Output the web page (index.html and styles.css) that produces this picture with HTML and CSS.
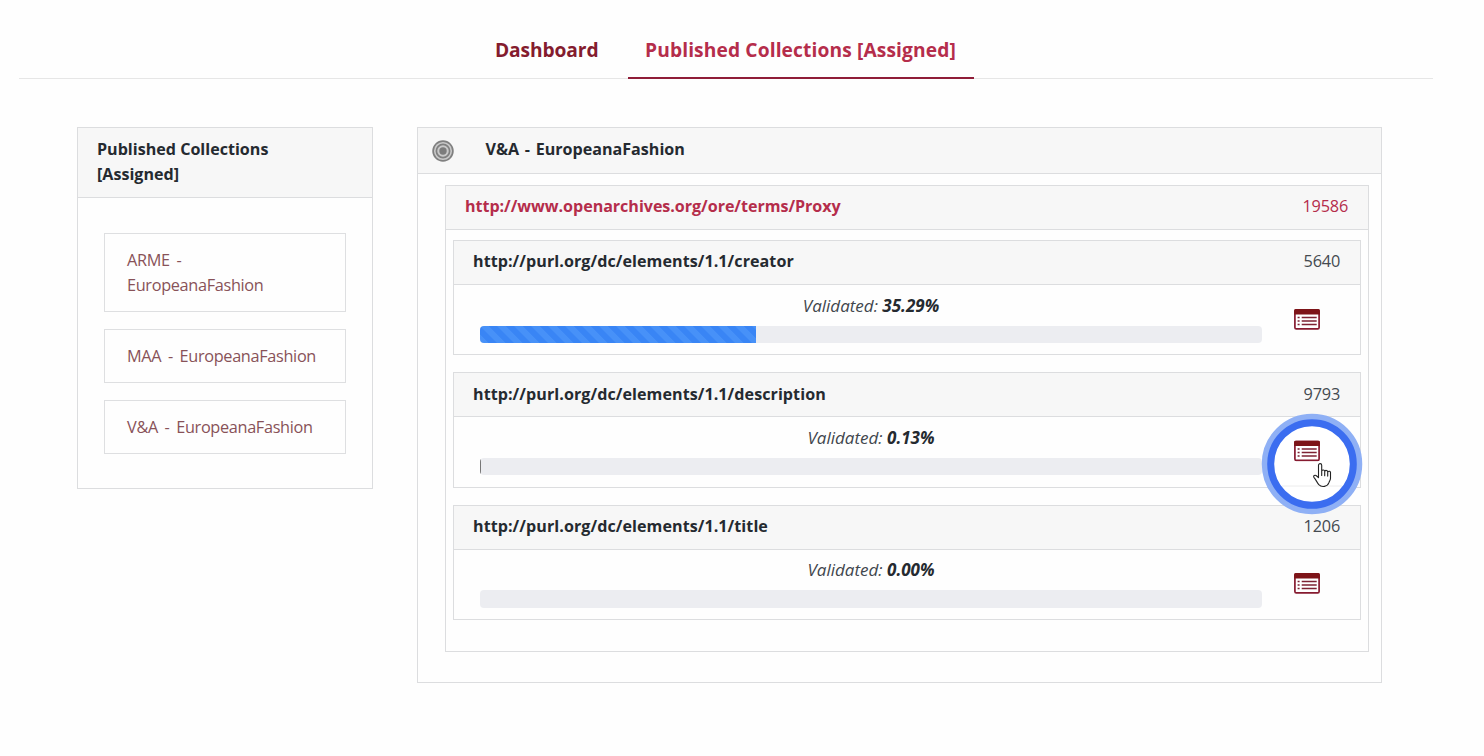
FILE: index.html
```html
<!DOCTYPE html>
<html lang="en">
<head>
<meta charset="utf-8">
<title>Published Collections</title>
<link rel="stylesheet" href="styles.css">
</head>
<body>
<svg class="sprite" width="0" height="0">
  <symbol id="list" viewBox="0 0 26 21">
    <rect x="0.9" y="0.9" width="24.2" height="18.9" rx="1.4" fill="#fff" stroke="#861b30" stroke-width="1.7"/>
    <path d="M0.1 5.4V1.8Q0.1 0.1 1.8 0.1H24.2Q25.9 0.1 25.9 1.8V5.4Z" fill="#7d1418"/>
    <path d="M3.6 8.5h2M3.6 12h2M3.6 15.5h2M7.7 8.5h15M7.7 12h15M7.7 15.5h15" stroke="#7d2233" stroke-width="1.6" fill="none"/>
  </symbol>
</svg>
<nav class="tabs">
  <a class="tab">Dashboard</a>
  <a class="tab active">Published Collections [Assigned]</a>
</nav>
<main class="layout">
  <aside class="card side">
    <h2 class="side-head">Published Collections<br>[Assigned]</h2>
    <ul class="side-list">
      <li class="side-item">ARME -<br>EuropeanaFashion</li>
      <li class="side-item">MAA - EuropeanaFashion</li>
      <li class="side-item">V&amp;A - EuropeanaFashion</li>
    </ul>
  </aside>
  <section class="card collection">
    <header class="collection-head">
      <svg class="target" viewBox="0 0 22 22"><circle cx="11" cy="11" r="10" fill="#c9c9c9"/><g fill="none" stroke="#808080"><circle cx="11" cy="11" r="9.9" stroke-width="1.7"/><circle cx="11" cy="11" r="6.6" stroke-width="1.7"/></g><circle cx="11" cy="11" r="3.7" fill="#7c7c7c"/></svg>
      <span class="name">V&amp;A - EuropeanaFashion</span>
    </header>
    <div class="card group">
      <header class="head head-group"><span class="url proxy">http://www.openarchives.org/ore/terms/Proxy</span><span class="count">19586</span></header>
      <div class="fields">
        <article class="card field">
          <header class="head"><span class="url">http://purl.org/dc/elements/1.1/creator</span><span class="count">5640</span></header>
          <div class="body">
            <div class="progress"><p class="label">Validated: <b>35.29%</b></p><div class="track"><div class="bar" style="width:35.29%"></div></div></div>
            <svg class="icon"><use href="#list"/></svg>
          </div>
        </article>
        <article class="card field">
          <header class="head"><span class="url">http://purl.org/dc/elements/1.1/description</span><span class="count">9793</span></header>
          <div class="body">
            <div class="progress"><p class="label">Validated: <b>0.13%</b></p><div class="track"><div class="bar tiny" style="width:0.13%"></div></div></div>
            <div class="pointer">
              <svg class="icon"><use href="#list"/></svg>
              <svg class="ring" viewBox="0 0 102 102">
                <circle cx="51" cy="51" r="47" fill="none" stroke="#8fb0f5" stroke-width="6.5"/>
                <circle cx="51" cy="51" r="41.3" fill="#fff" stroke="#3b6df0" stroke-width="7"/>
                <path d="M21 73H81" stroke="#ececec" stroke-width="1"/>
                <svg x="33" y="27.5" width="26" height="21"><use href="#list"/></svg>
                <path d="M57.5 64.7V52.2a1.6 1.6 0 0 1 3.2 0v6.1a1.5 1.5 0 0 1 3 .3a1.5 1.5 0 0 1 3 .7a1.4 1.4 0 0 1 2.8.8v5.2c0 2-1.5 3.2-1.7 4.6c-1.3 3.7-7 5-10 1.7c-1.7-2-2.7-4.5-4.7-6.9c-1.5-2 1-3.3 2.6-1.7ZM60.7 58.3v4.2M63.7 58.8v4M66.7 59.6v3.5" fill="#fff" stroke="#222" stroke-width="1.1" stroke-linejoin="round" stroke-linecap="round"/>
              </svg>
            </div>
          </div>
        </article>
        <article class="card field">
          <header class="head"><span class="url">http://purl.org/dc/elements/1.1/title</span><span class="count">1206</span></header>
          <div class="body">
            <div class="progress"><p class="label">Validated: <b>0.00%</b></p><div class="track"></div></div>
            <svg class="icon"><use href="#list"/></svg>
          </div>
        </article>
      </div>
    </div>
  </section>
</main>
</body>
</html>
```
FILE: styles.css
```css
* { box-sizing: border-box; }
body {
  margin: 0;
  width: 1484px;
  height: 756px;
  overflow: hidden;
  background: #fefefe;
  color: #252a30;
  font: 17px/25.5px "Open Sans", "Noto Sans", sans-serif;
}
h2, p, ul { margin: 0; padding: 0; list-style: none; }
.sprite { display: block; height: 0; }
.tabs {
  display: flex;
  gap: 13px;
  height: 79px;
  margin: 0 51px 0 19px;
  padding: 20px 0 0 459px;
  border-bottom: 1px solid #e6e6e6;
}
.tab {
  width: 137px;
  height: 59px;
  padding: 15px 17px 0;
  color: #841c2e;
  font-size: 19.2px;
  line-height: 30px;
  font-weight: 700;
  letter-spacing: -0.1px;
  white-space: nowrap;
}
.active {
  width: 346px;
  color: #b52d4b;
  border-bottom: 2px solid #8f1d38;
  letter-spacing: 0.12px;
}
.layout { display: flex; align-items: flex-start; gap: 44px; padding: 48px 0 0 77px; }
.card { border: 1px solid #dcdddf; background: #fefefe; }
.side { width: 296px; height: 362px; }
.side-head {
  height: 70px;
  padding: 8.5px 19px 0;
  background: #f7f7f7;
  border-bottom: 1px solid #dcdddf;
  font-size: 16.1px;
  font-weight: 700;
}
.side-list { display: flex; flex-direction: column; gap: 17px; padding: 35px 26px; }
.side-item {
  padding: 13.5px 22px 12.9px;
  border: 1px solid #dedfe1;
  color: #885258;
  font-size: 16.3px;
  letter-spacing: -0.33px;
  word-spacing: 2.8px;
  white-space: nowrap;
}
.collection { width: 965px; height: 556px; }
.collection-head {
  display: flex;
  align-items: center;
  height: 46px;
  padding: 0 14px;
  background: #f7f7f7;
  border-bottom: 1px solid #dcdddf;
  font-size: 16.1px;
  font-weight: 700;
}
.target { width: 22px; height: 22px; margin-right: 31.5px; }
.name { margin-top: -1px; word-spacing: 1.5px; }
.group { width: 924px; height: 467px; margin: 11px 0 0 27px; }
.head {
  display: flex;
  align-items: center;
  justify-content: space-between;
  height: 44px;
  padding: 0 20px 0.6px 19px;
  background: #f7f7f7;
  border-bottom: 1px solid #dcdddf;
}
.url { font-size: 16.1px; font-weight: 700; letter-spacing: 0.06px; }
.proxy { letter-spacing: -0.04px; }
.count { font-size: 16.3px; letter-spacing: -0.2px; color: #454a50; }
.head-group, .head-group .count { color: #b52d4b; }
.fields { display: flex; flex-direction: column; gap: 17px; padding: 10px 7px; }
.field { height: 115.3px; }
.body { display: flex; justify-content: space-between; padding: 7.5px 40px 0 26px; }
.progress { width: 782px; }
.label { text-align: center; font-style: italic; line-height: 26px; color: #41464d; }
.label b { font-weight: 700; color: #252a30; }
.track { height: 17.5px; margin-top: 7px; border-radius: 4px; background: #ecedf1; overflow: hidden; }
.bar {
  height: 100%;
  background: linear-gradient(45deg, #4791f8 24%, #3985f5 27%, #3985f5 49%, #4791f8 51%, #4791f8 74%, #3985f5 77%, #3985f5 98%, #4791f8 100%) 0 0 / 17px 17px;
}
.tiny { background: #777; }
.icon { display: block; width: 26px; height: 21px; margin-top: 16px; }
.pointer { position: relative; }
.ring { position: absolute; left: -33px; top: -11.5px; width: 102px; height: 102px; }
```
